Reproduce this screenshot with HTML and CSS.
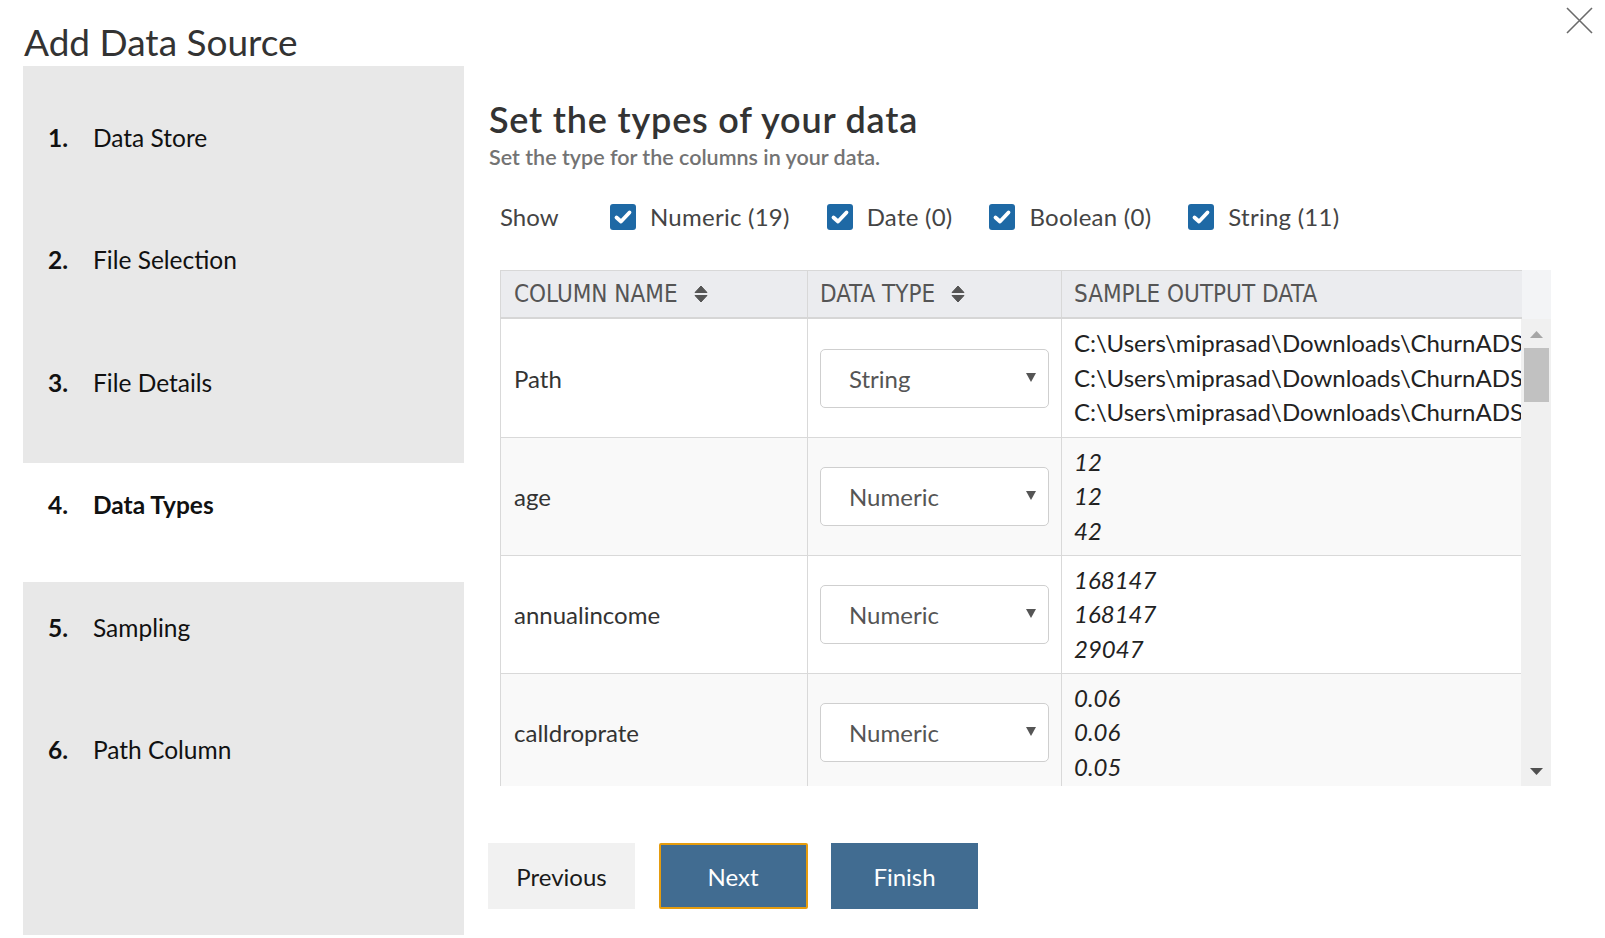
FILE: index.html
```html
<!DOCTYPE html>
<html lang="en">
<head>
<meta charset="utf-8">
<title>Add Data Source</title>
<link rel="stylesheet" href="styles.css">
</head>
<body>
<div class="dialog">
  <header class="dlg-header">
    <h1 class="dlg-title">Add Data Source</h1>
    <button class="close-btn" aria-label="Close">
      <svg width="27" height="27" viewBox="0 0 27 27"><path d="M1 1L26 26M26 1L1 26" stroke="#6b6b6b" stroke-width="1.6" fill="none"/></svg>
    </button>
  </header>
  <div class="layout">
    <nav class="steps">
      <div class="step"><span class="step-num">1.</span><span class="step-label">Data Store</span></div>
      <div class="step"><span class="step-num">2.</span><span class="step-label">File Selection</span></div>
      <div class="step"><span class="step-num">3.</span><span class="step-label">File Details</span></div>
      <div class="step active"><span class="step-num">4.</span><span class="step-label">Data Types</span></div>
      <div class="step"><span class="step-num">5.</span><span class="step-label">Sampling</span></div>
      <div class="step"><span class="step-num">6.</span><span class="step-label">Path Column</span></div>
    </nav>
    <main class="content">
      <h2 class="content-title">Set the types of your data</h2>
      <p class="content-sub">Set the type for the columns in your data.</p>
      <div class="filters">
        <span class="filters-label">Show</span>
        <label class="check"><span class="box"><svg width="26" height="26" viewBox="0 0 26 26"><path d="M6.5 13.5L11 17.5L19.5 8.5" stroke="#fff" stroke-width="3.8" fill="none" stroke-linecap="round" stroke-linejoin="round"/></svg></span>Numeric (19)</label>
        <label class="check"><span class="box"><svg width="26" height="26" viewBox="0 0 26 26"><path d="M6.5 13.5L11 17.5L19.5 8.5" stroke="#fff" stroke-width="3.8" fill="none" stroke-linecap="round" stroke-linejoin="round"/></svg></span>Date (0)</label>
        <label class="check"><span class="box"><svg width="26" height="26" viewBox="0 0 26 26"><path d="M6.5 13.5L11 17.5L19.5 8.5" stroke="#fff" stroke-width="3.8" fill="none" stroke-linecap="round" stroke-linejoin="round"/></svg></span>Boolean (0)</label>
        <label class="check"><span class="box"><svg width="26" height="26" viewBox="0 0 26 26"><path d="M6.5 13.5L11 17.5L19.5 8.5" stroke="#fff" stroke-width="3.8" fill="none" stroke-linecap="round" stroke-linejoin="round"/></svg></span>String (11)</label>
      </div>

      <div class="grid">
        <div class="grid-head-row">
          <table class="grid-table grid-head">
            <colgroup><col class="c1"><col class="c2"><col class="c3"></colgroup>
            <thead>
              <tr>
                <th><span class="th-text">Column Name</span><svg class="sort" width="14" height="18" viewBox="0 0 14 18"><path d="M1 7.5L7 1L13 7.5Z M1 10.5L13 10.5L7 17Z" fill="#555" stroke="#555" stroke-width="1" stroke-linejoin="round"/></svg></th>
                <th><span class="th-text">Data Type</span><svg class="sort" width="14" height="18" viewBox="0 0 14 18"><path d="M1 7.5L7 1L13 7.5Z M1 10.5L13 10.5L7 17Z" fill="#555" stroke="#555" stroke-width="1" stroke-linejoin="round"/></svg></th>
                <th><span class="th-text">Sample Output Data</span></th>
              </tr>
            </thead>
          </table>
          <div class="head-spacer"></div>
        </div>
        <div class="grid-body-row">
          <div class="grid-viewport">
            <table class="grid-table grid-body">
              <colgroup><col class="c1"><col class="c2"><col class="c3"></colgroup>
              <tbody>
                <tr>
                  <td class="name">Path</td>
                  <td class="type"><div class="select"><span>String</span><svg width="10" height="9" viewBox="0 0 10 9"><path d="M0 0H10L5 9Z" fill="#555"/></svg></div></td>
                  <td class="sample"><div>C:\Users\miprasad\Downloads\ChurnADS\</div><div>C:\Users\miprasad\Downloads\ChurnADS\</div><div>C:\Users\miprasad\Downloads\ChurnADS\</div></td>
                </tr>
                <tr class="alt">
                  <td class="name">age</td>
                  <td class="type"><div class="select"><span>Numeric</span><svg width="10" height="9" viewBox="0 0 10 9"><path d="M0 0H10L5 9Z" fill="#555"/></svg></div></td>
                  <td class="sample num"><div>12</div><div>12</div><div>42</div></td>
                </tr>
                <tr>
                  <td class="name">annualincome</td>
                  <td class="type"><div class="select"><span>Numeric</span><svg width="10" height="9" viewBox="0 0 10 9"><path d="M0 0H10L5 9Z" fill="#555"/></svg></div></td>
                  <td class="sample num"><div>168147</div><div>168147</div><div>29047</div></td>
                </tr>
                <tr class="alt">
                  <td class="name">calldroprate</td>
                  <td class="type"><div class="select"><span>Numeric</span><svg width="10" height="9" viewBox="0 0 10 9"><path d="M0 0H10L5 9Z" fill="#555"/></svg></div></td>
                  <td class="sample num"><div>0.06</div><div>0.06</div><div>0.05</div></td>
                </tr>
              </tbody>
            </table>
          </div>
          <div class="scrollbar">
            <svg class="sb-arrow" width="13" height="7" viewBox="0 0 13 7"><path d="M0 7L6.5 0L13 7Z" fill="#a6a6a6"/></svg>
            <div class="sb-thumb"></div>
            <div class="sb-track"></div>
            <svg class="sb-arrow" width="13" height="7" viewBox="0 0 13 7"><path d="M0 0H13L6.5 7Z" fill="#505050"/></svg>
          </div>
        </div>
      </div>

      <div class="actions">
        <button class="btn btn-secondary">Previous</button>
        <button class="btn btn-primary focused">Next</button>
        <button class="btn btn-primary">Finish</button>
      </div>
    </main>
  </div>
</div>
</body>
</html>
```

FILE: styles.css
```css
* { box-sizing: border-box; }

html, body {
  margin: 0;
  padding: 0;
  background: #ffffff;
}

body {
  font-family: Lato, "Open Sans", "Noto Sans", sans-serif;
  color: #333;
  width: 1605px;
  height: 938px;
  overflow: hidden;
}

.dlg-header {
  display: flex;
  justify-content: space-between;
  align-items: flex-start;
  height: 66px;
  padding: 0 12px 0 24px;
}

.dlg-title {
  margin: 0;
  padding-top: 20px;
  font-size: 37px;
  line-height: 44px;
  font-weight: 400;
  color: #333;
}

.close-btn {
  margin-top: 7px;
  width: 27px;
  height: 27px;
  padding: 0;
  border: 0;
  background: none;
  display: block;
}
.close-btn svg { display: block; }

.layout {
  display: flex;
  padding-left: 23px;
  height: 869px;
}

.steps {
  flex: 0 0 441px;
  width: 441px;
  background: #e8e8e8;
  padding-top: 29.5px;
  display: flex;
  flex-direction: column;
  gap: 4px;
}

.step {
  height: 118.5px;
  padding: 27px 0 0 25px;
  display: flex;
  font-size: 24.5px;
  line-height: 30px;
  color: #111;
}

.step-num {
  width: 45px;
  font-weight: 700;
}

.step.active {
  background: #ffffff;
}
.step.active .step-label { font-weight: 700; }

.content {
  flex: 1;
  margin-left: 25px;
  padding-top: 32px;
}

.content-title {
  margin: 0;
  font-size: 36px;
  line-height: 42px;
  font-weight: 600;
  letter-spacing: 0.8px;
  color: #333;
}

.content-sub {
  margin: 3.7px 0 0;
  font-size: 21.5px;
  line-height: 26px;
  font-weight: 600;
  color: #737373;
}

.filters {
  margin-top: 32.3px;
  height: 30px;
  display: flex;
  align-items: center;
  padding-left: 11px;
  font-size: 24px;
  line-height: 30px;
  color: #444;
}

.filters-label { width: 110px; }

.check {
  display: flex;
  align-items: center;
  gap: 14px;
  margin-right: 37px;
  letter-spacing: 0.25px;
}

.box {
  width: 26px;
  height: 26px;
  border-radius: 3px;
  background: #1e69a5;
  display: block;
}
.box svg { display: block; }

.grid {
  margin-top: 38px;
  margin-left: 11px;
  width: 1051px;
}

.grid-head-row,
.grid-body-row {
  display: flex;
}

.grid-table {
  width: 1021px;
  table-layout: fixed;
  border-collapse: collapse;
}
.grid-table col.c1 { width: 307px; }
.grid-table col.c2 { width: 254px; }
.grid-table col.c3 { width: 460px; }

.grid-head th {
  height: 48px;
  padding: 0 12px;
  background: #ebecef;
  border: 1px solid #d8d8d8;
  border-bottom: 2px solid #d6d6d6;
  text-align: left;
  font-weight: 400;
  color: #555;
  white-space: nowrap;
  vertical-align: middle;
}
.grid-head th:first-child { padding-left: 13px; }
.grid-head th:last-child { border-right: 0; }

.th-text {
  font-family: "Liberation Sans Narrow", "DejaVu Sans Condensed", Lato, sans-serif;
  font-size: 24px;
  text-transform: uppercase;
  vertical-align: middle;
}

.sort {
  vertical-align: middle;
  margin-left: 16px;
}

.head-spacer {
  width: 30px;
  background: #f3f4f6;
}

.grid-viewport {
  width: 1021px;
  height: 467px;
  overflow: hidden;
}

.grid-body td {
  height: 118px;
  border: 1px solid #d9d9d9;
  border-top: 0;
  padding: 0 12px;
  font-size: 24px;
  color: #333;
  vertical-align: middle;
  overflow: hidden;
  white-space: nowrap;
}
.grid-body td:last-child { border-right: 0; padding-right: 0; }
.grid-body td.name { padding-left: 13px; }
.grid-body tr.alt td { background: #f9f9f9; }

.select {
  width: 229px;
  height: 59px;
  border: 1px solid #cfcfcf;
  border-radius: 5px;
  background: #fff;
  display: flex;
  align-items: center;
  justify-content: space-between;
  padding: 0 12px 0 28px;
  color: #555;
}
.select svg { display: block; margin-top: -2px; }

.sample div {
  line-height: 34.5px;
  color: #222;
  text-overflow: clip;
  overflow: hidden;
}
.sample.num div { font-style: italic; }

.scrollbar {
  width: 30px;
  height: 467px;
  background: #f0f0f0;
  display: flex;
  flex-direction: column;
  align-items: center;
  padding: 12px 0 11px;
}
.sb-arrow { display: block; flex: 0 0 auto; }
.sb-thumb {
  margin-top: 10px;
  width: 25px;
  height: 54px;
  background: #c1c1c1;
  margin-left: 1px;
}
.sb-track { flex: 1; }

.actions {
  margin-top: 57px;
  margin-left: -1px;
  display: flex;
  gap: 23.5px;
}

.btn {
  height: 66px;
  width: 147px;
  font-family: Lato, "Open Sans", sans-serif;
  font-size: 24px;
  border: 0;
  border-radius: 0;
  padding: 0;
}
.btn-secondary {
  background: #f1f1f1;
  color: #1a1a1a;
}
.btn-primary {
  background: #416c91;
  color: #ffffff;
}
.btn-primary.focused {
  width: 149px;
  border: 2px solid #e59c0e;
  border-radius: 2px;
}
```
